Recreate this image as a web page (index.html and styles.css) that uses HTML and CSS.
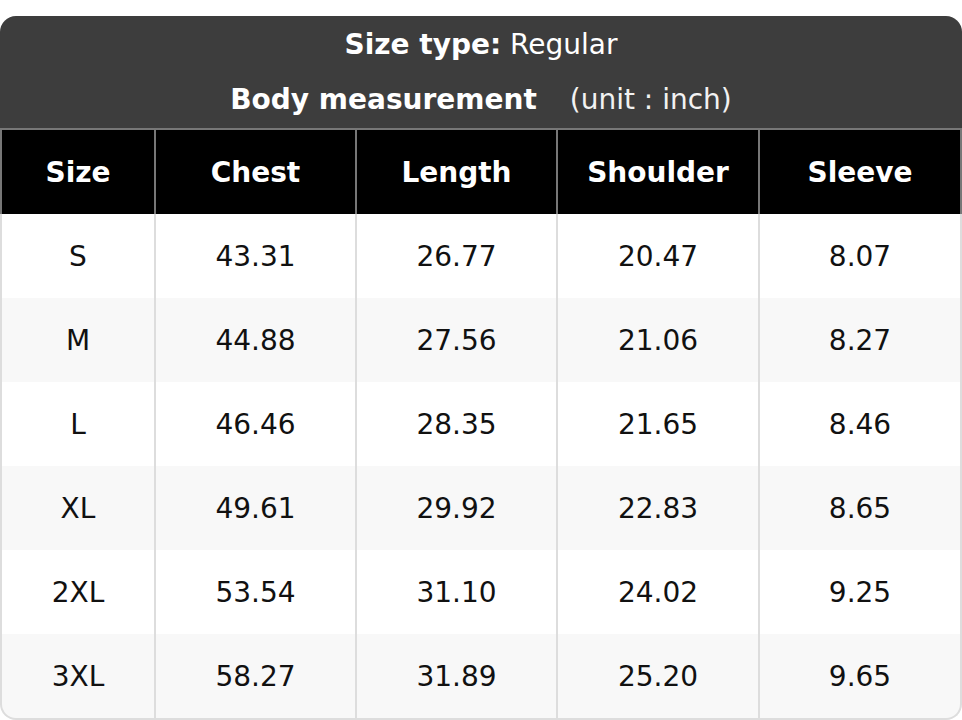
FILE: index.html
```html
<!DOCTYPE html>
<html>
<head>
<meta charset="utf-8">
<link rel="stylesheet" href="styles.css">
</head>
<body>
<div class="card">
  <div class="title">
    <div class="line"><b>Size type:</b>&nbsp;Regular</div>
    <div class="line second"><b>Body measurement</b><span class="unit">(unit : inch)</span></div>
  </div>
  <div class="row head">
    <div class="cell">Size</div>
    <div class="cell">Chest</div>
    <div class="cell">Length</div>
    <div class="cell">Shoulder</div>
    <div class="cell">Sleeve</div>
  </div>
  <div class="row">
    <div class="cell">S</div><div class="cell">43.31</div><div class="cell">26.77</div><div class="cell">20.47</div><div class="cell">8.07</div>
  </div>
  <div class="row alt">
    <div class="cell">M</div><div class="cell">44.88</div><div class="cell">27.56</div><div class="cell">21.06</div><div class="cell">8.27</div>
  </div>
  <div class="row">
    <div class="cell">L</div><div class="cell">46.46</div><div class="cell">28.35</div><div class="cell">21.65</div><div class="cell">8.46</div>
  </div>
  <div class="row alt">
    <div class="cell">XL</div><div class="cell">49.61</div><div class="cell">29.92</div><div class="cell">22.83</div><div class="cell">8.65</div>
  </div>
  <div class="row">
    <div class="cell">2XL</div><div class="cell">53.54</div><div class="cell">31.10</div><div class="cell">24.02</div><div class="cell">9.25</div>
  </div>
  <div class="row alt last">
    <div class="cell">3XL</div><div class="cell">58.27</div><div class="cell">31.89</div><div class="cell">25.20</div><div class="cell">9.65</div>
  </div>
</div>
</body>
</html>
```
FILE: styles.css
```css
* { box-sizing: border-box; }
html, body { margin: 0; padding: 0; background: #fff; }
body {
  font-family: "DejaVu Sans", Verdana, sans-serif;
  font-size: 28px;
  color: #111;
}
.card {
  margin-top: 16px;
  width: 962px;
}
.title {
  background: #3d3d3d;
  color: #fff;
  border-radius: 16px 16px 0 0;
}
.line {
  height: 56px;
  display: flex;
  align-items: center;
  justify-content: center;
  white-space: pre;
}
.line.second { padding-bottom: 2px; }
.line b { font-weight: bold; }
.unit { margin-left: 33px; color: #f2f2f2; }
.row {
  display: grid;
  grid-template-columns: 154px 201px 201px 202px 1fr;
  height: 84px;
  border-left: 2px solid #ddd;
  border-right: 2px solid #ddd;
  background: #fff;
}
.row.alt { background: #f8f8f8; }
.row.last {
  height: 86px;
  border-bottom: 2px solid #ddd;
  border-radius: 0 0 16px 16px;
  overflow: hidden;
}
.cell {
  display: flex;
  align-items: center;
  justify-content: center;
  border-right: 2px solid #ddd;
}
.cell:last-child { border-right: none; }
.row.head {
  height: 86px;
  background: #000;
  color: #fff;
  font-weight: bold;
  border-top: 2px solid #777;
  border-left-color: #777;
  border-right-color: #777;
}
.row.head .cell { border-right-color: #777; }
.row.head .cell:last-child { border-right: none; }
```
